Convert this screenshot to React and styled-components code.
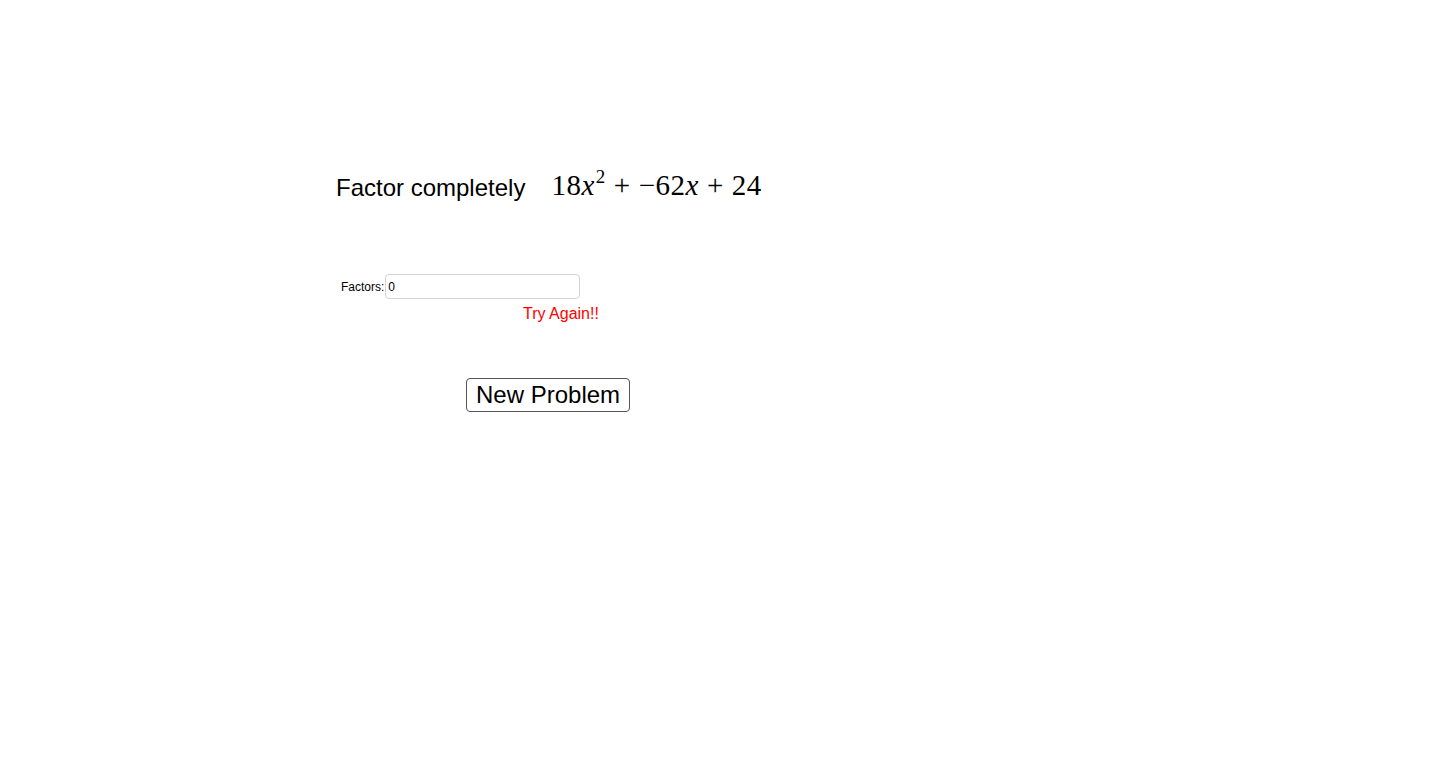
import React from 'react';
import styled, { createGlobalStyle } from 'styled-components';

const GlobalStyle = createGlobalStyle`
  html, body {
    margin: 0;
    padding: 0;
    background: #fff;
  }
  body {
    font-family: "Liberation Sans", Arial, sans-serif;
    color: #000;
  }
`;

const Applet = styled.div`
  width: 1456px;
  height: 779px;
  overflow: hidden;
  display: flex;
  flex-direction: column;
  padding: 170px 0 0 336px;
  box-sizing: border-box;
`;

const Prompt = styled.div`
  display: flex;
  align-items: baseline;
  gap: 26px;
  height: 40px;
`;

const PromptText = styled.span`
  font-size: 24px;
`;

const MathExpr = styled.span`
  font-family: "Liberation Serif", "DejaVu Serif", serif;
  font-size: 29px;
  letter-spacing: 0.5px;
  position: relative;
  top: -1px;
`;

const Var = styled.i`
  font-style: italic;
`;

const Sup = styled.sup`
  font-size: 19px;
  vertical-align: 12px;
  line-height: 0;
  margin-left: 1px;
`;

const Op = styled.span`
  margin: 0 8px;
`;

const InputRow = styled.div`
  display: flex;
  align-items: center;
  margin-top: 64px;
  margin-left: 5px;
  gap: 1px;
`;

const Label = styled.label`
  font-size: 12px;
`;

const TextInput = styled.input`
  width: 195px;
  height: 25px;
  box-sizing: border-box;
  border: 1px solid #d4d4d4;
  border-radius: 4px;
  padding: 0 2px;
  font-family: "Liberation Sans", Arial, sans-serif;
  font-size: 12px;
  outline: none;
`;

const Feedback = styled.div`
  color: #ff0000;
  font-size: 16px;
  margin-top: 6px;
  margin-left: 187px;
`;

const ButtonRow = styled.div`
  margin-top: 55px;
  margin-left: 130px;
`;

const NewButton = styled.button`
  height: 34px;
  padding: 0 9px;
  background: #fff;
  border: 1px solid #555;
  border-radius: 4px;
  font-family: "Liberation Sans", Arial, sans-serif;
  font-size: 24px;
  color: #000;
  cursor: pointer;
`;

export default function App() {
  return (
    <>
      <GlobalStyle />
      <Applet>
        <Prompt>
          <PromptText>Factor completely</PromptText>
          <MathExpr>
            18<Var>x</Var>
            <Sup>2</Sup>
            <Op>+</Op>−62<Var>x</Var>
            <Op>+</Op>24
          </MathExpr>
        </Prompt>
        <InputRow>
          <Label htmlFor="factors">Factors:</Label>
          <TextInput id="factors" defaultValue="0" />
        </InputRow>
        <Feedback>Try Again!!</Feedback>
        <ButtonRow>
          <NewButton>New Problem</NewButton>
        </ButtonRow>
      </Applet>
    </>
  );
}
